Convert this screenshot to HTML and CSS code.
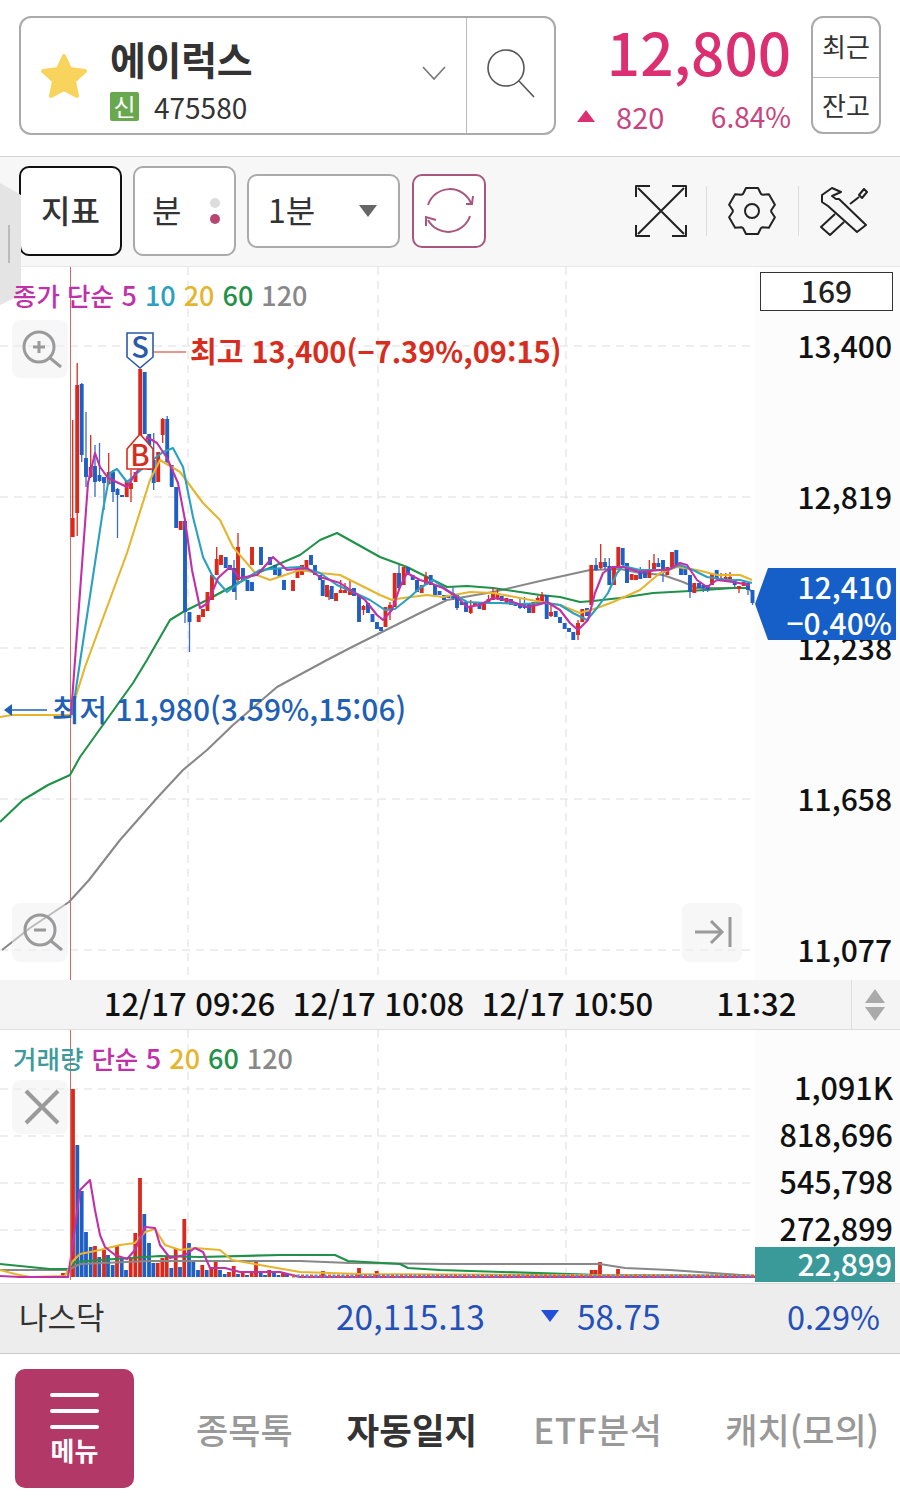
FILE: index.html
```html
<!DOCTYPE html>
<html lang="ko">
<head>
  <meta charset="UTF-8">
  <meta name="viewport" content="width=device-width, initial-scale=1.0">
  <title>에이럭스 차트</title>
  <link rel="stylesheet" href="styles.css">
</head>
<body>

  <header class="quote-header">
    <div class="symbol-box">
      <svg class="star" width="50" height="48" viewBox="0 0 50 48"><path d="M25 4 L31 17 L46 19 L35 29 L38 44 L25 37 L12 44 L15 29 L4 19 L19 17 Z"/></svg>
      <div class="symbol-info">
        <div class="symbol-name">에이럭스</div>
        <div class="symbol-code"><span class="new-badge">신</span>475580</div>
      </div>
      <svg class="chevron" width="26" height="16" viewBox="0 0 26 16"><path d="M2 2 L13 14 L24 2"/></svg>
      <div class="search-btn">
        <svg width="52" height="52" viewBox="0 0 52 52"><circle cx="21" cy="20" r="18"/><path d="M34 33 L49 49"/></svg>
      </div>
    </div>
    <div class="price-box">
      <div class="price-now">12,800</div>
      <div class="price-change">
        <span class="up-arrow"></span>
        <span class="change-amt">820</span>
        <span class="change-pct">6.84%</span>
      </div>
    </div>
    <div class="side-btns">
      <div class="side-btn side-btn-top">최근</div>
      <div class="side-btn">잔고</div>
    </div>
  </header>

  <div class="toolbar">
    <div class="side-tab"></div>
    <button class="tool-btn tool-btn-active">지표</button>
    <button class="tool-btn tool-btn-min">분<span class="dots"><i></i><i class="dot-on"></i></span></button>
    <button class="period-select">1분<span class="down-caret"></span></button>
    <button class="refresh-btn">
      <svg width="74" height="74" viewBox="0 0 74 74"><path d="M16 31 A23 23 0 0 1 59 29 M54 30 L60 30 L61 22 M58 42 A23 23 0 0 1 16 46 M14 52 L14 43 L24 46"/></svg>
    </button>
    <div class="tool-icons">
      <svg width="52" height="52" viewBox="0 0 52 52"><path d="M1 12 V1 H15 M37 1 H51 V12 M51 40 V51 H37 M15 51 H1 V40 M3 3 L49 49 M49 3 L3 49"/></svg>
      <span class="tool-sep"></span>
      <svg width="50" height="50" viewBox="-25 -25 50 50"><path d="M-9 -17 L-6 -23 L6 -23 L9 -17 L10.2 -16.3 L16.9 -16.7 L22.9 -6.3 L19.2 -.7 L19.2 .7 L22.9 6.3 L16.9 16.7 L10.2 16.3 L9 17 L6 23 L-6 23 L-9 17 L-10.2 16.3 L-16.9 16.7 L-22.9 6.3 L-19.2 .7 L-19.2 -.7 L-22.9 -6.3 L-16.9 -16.7 L-10.2 -16.3 Z"/><circle r="7"/></svg>
      <span class="tool-sep tool-sep-wide"></span>
      <svg width="50" height="50" viewBox="0 0 50 50"><path d="M13 2 L3 9 L3 16 L9 20 L38 46 L47 39 L20 13 L17 13 L13 10 L22 6 Z M40 9 L45 3 L48 6 L43 12 Z M40 11 L31 18 M16 28 L2 41 L11 49 L25 36"/></svg>
    </div>
  </div>

  <section class="price-chart">
    <svg class="chart-svg" width="900" height="713" viewBox="0 267 900 713">
      <rect class="axis-bg" x="755" y="267" width="145" height="713"/>
      <path class="grid" d="M0 346H755M0 497H755M0 648H755M0 799H755M0 950H755M188 267V980M378 267V980M566 267V980"/>
      <path class="day-line" d="M70.5 267V980"/>

      <path class="ma ma120" d="M2 950 L30 928 L69 902 L89 880 L120 840 L157 798 L183 770 L207 750 L233 725 L277 687 L327 660 L350 648 L380 633 L420 613 L447 600 L493 592 L540 581 L590 570 L620 569 L640 573 L663 575 L683 582 L697 588 L723 588 L748 588 L752 592"/>
      <path class="ma ma60" d="M0 822 L23 800 L48 785 L70 775 L80 757 L133 683 L147 660 L170 620 L183 612 L207 600 L253 575 L300 555 L320 540 L337 533 L380 557 L407 567 L447 587 L467 586 L493 588 L520 592 L540 595 L560 597 L580 602 L593 601 L620 598 L653 593 L690 591 L733 588 L747 588"/>

      <path class="wick wick-r" d="M72.7 420V537M77.2 363V536M90.7 435V478M108.7 453V485M131 470V502M162.7 418V443M216.7 547V575M238 533V582M329 590V600M340.7 580V593M345 583V593M350 580V595M363.5 605V615M390 602V620M426 572V585M470.7 600V614M488.5 595V603M493 588V600M497.5 589V600M537.7 596V604M542 592V604M551 605V617M578 620V640M600.7 544V569M649.3 560V578M654 554V570M721 573V580M725.7 573V580M730 572V580M739 586V593"/>
      <path class="wick wick-b" d="M81.7 383V462M86 412V487M95 445V497M99.5 443V482M104 477V510M113 470V502M117.5 488V538M153.7 433V490M167.2 416V463M185 521V623M189.5 612V652M234 560V592M236 568V600M399 565V590M453 587V600M457 595V610M520 598V609M524.5 597V609M596 558V571M605 558V570M609.3 558V585M640.3 567V579M658.3 558V567M663 560V582M690 575V598M703.3 585V592M707.7 585V592M734.7 579V587M748 583V595M752.5 590V605"/>
      <path class="body body-r" d="M72.7 518V537M77.2 385V513M90.7 467V477M108.7 472V484M126.7 480V497M131 483V489M135.5 472V482M140.2 369V437M158.2 452V482M162.7 419V435M180.7 521V530M198.7 615V622M203 609V617M207.5 592V611M212 575V600M216.7 559V575M221 555V565M238 547V580M252 547V565M293 580V591M297.5 570V578M302 565V575M306.5 560V572M327 585V597M336 593V601M340.7 590V593M345 590V593M350 589V595M363.5 606V610M385.5 607V627M390 605V610M394.7 573V607M403.7 567V585M421.7 585V593M426 577V585M470.7 607V613M475 602V605M484 602V610M488.5 599V603M493 593V600M497.5 593V598M506.5 598V603M533.3 602V613M537.7 598V604M542 595V604M551 612V616M578 623V635M582.3 609V622M591.3 565V605M600.7 562V568M614 568V585M618.3 547V566M631.7 574V580M636 575V580M649.3 570V578M654 563V570M667.3 567V575M672 552V567M694.3 583V593M712 573V585M721 578V580M725.7 577V580M730 577V580M739 586V589M743.7 582V586"/>
      <path class="body body-b" d="M81.7 384V455M86 458V477M95 466V482M99.5 475V481M104 477V483M113 472V492M117.5 489V495M122 495V497M144.7 372V434M149.2 434V470M153.7 460V483M167.2 419V462M171.7 465V487M176.2 487V528M185 521V612M189.5 612V622M225.7 557V568M230 565V570M234 568V592M243 568V580M247.5 580V591M252 582V591M261 547V565M270 557V565M275 565V575M279.5 568V577M284 580V590M311 555V565M315 565V575M320 575V580M322.7 580V596M331.7 586V599M354 588V596M359 596V622M368 603V613M372.5 614V622M377 622V629M381 627V631M399 573V588M408 567V575M412.7 575V580M417 580V592M430.7 575V585M435 585V595M439.5 591V595M444 595V600M448.5 595V598M453 593V598M457 595V608M461.7 602V605M466 602V612M479.5 602V609M501.7 596V601M511 599V605M515.5 603V606M520 603V608M524.5 603V608M529 604V613M546.7 595V619M555.7 611V617M560 617V623M564.7 623V629M569 628V632M573.3 632V640M587 608V616M596 565V570M605 562V567M609.3 566V585M622.7 548V565M627 563V583M640.3 572V579M645 572V578M658.3 563V567M663 560V573M676.3 550V565M681 565V575M685.3 567V575M690 575V592M699 583V588M703.3 585V588M707.7 585V590M716.7 570V578M734.7 579V585M748 583V590M752.5 590V603"/>

      <path class="ma ma20" d="M0 717 L12 715 L70 715 L85 667 L127 553 L150 480 L160 460 L180 472 L203 503 L220 520 L233 547 L257 575 L270 580 L300 570 L320 573 L340 575 L360 585 L380 595 L392 600 L403 598 L427 595 L443 597 L470 592 L493 593 L520 598 L547 603 L560 605 L580 613 L597 608 L613 602 L640 590 L660 573 L677 567 L697 570 L717 575 L740 575 L752 580"/>
      <path class="ma ma10" d="M72 715 L103 510 L110 473 L117 469 L127 482 L150 462 L163 452 L173 448 L183 467 L193 517 L203 557 L212 575 L227 592 L243 580 L260 570 L283 568 L300 567 L320 573 L337 585 L353 592 L370 600 L385 610 L395 609 L410 597 L420 588 L433 580 L450 592 L467 602 L487 603 L500 603 L520 604 L547 603 L560 605 L573 613 L587 620 L597 608 L608 593 L617 573 L623 566 L640 570 L667 570 L680 565 L693 570 L707 577 L727 580 L740 580 L752 583"/>
      <path class="ma ma5" d="M71 715 L88 483 L95 453 L100 467 L108 478 L127 487 L140 467 L147 437 L157 443 L167 458 L178 483 L185 520 L192 570 L200 608 L208 603 L218 578 L230 567 L240 578 L257 575 L273 557 L287 570 L307 568 L320 577 L340 583 L365 600 L377 615 L383 620 L392 610 L400 587 L407 573 L420 580 L430 583 L443 588 L457 597 L467 607 L480 605 L493 598 L507 600 L527 607 L537 605 L547 602 L560 610 L570 623 L578 630 L588 620 L595 593 L603 573 L612 567 L623 567 L640 572 L660 570 L668 570 L680 563 L687 565 L697 580 L707 587 L717 580 L733 582 L750 585"/>

      <path class="marker marker-s" d="M127 333H153V357L140 368L127 357Z"/>
      <text class="marker-text text-s" x="140" y="358">S</text>
      <path class="marker marker-b" d="M127 449L140 434L153 449V469H127Z"/>
      <text class="marker-text text-b" x="140" y="466">B</text>
      <path class="high-line" d="M153 352H186"/>
      <text class="high-text" x="190" y="363">최고 13,400(−7.39%,09:15)</text>
      <path class="low-line" d="M12 710H47"/>
      <path class="low-head" d="M4 710L12 704V716Z"/>
      <text class="low-text" x="52" y="721">최저 11,980(3.59%,15:06)</text>
    </svg>

    <div class="chart-legend">
      <span class="c-ma5"><span class="legend-ko">종가 단순</span> 5</span>
      <span class="c-ma10">10</span>
      <span class="c-ma20">20</span>
      <span class="c-ma60">60</span>
      <span class="c-ma120">120</span>
    </div>

    <div class="chart-btn btn-zoom-in">
      <svg width="56" height="58" viewBox="0 0 56 58"><circle cx="27" cy="27" r="15"/><path d="M38 38 L49 47 M21 27H33M27 21V33"/></svg>
    </div>
    <div class="chart-btn btn-zoom-out">
      <svg width="56" height="58" viewBox="0 0 56 58"><circle cx="28" cy="27" r="15"/><path d="M39 38 L50 47 M22 27H34"/></svg>
    </div>
    <div class="chart-btn btn-latest">
      <svg width="60" height="58" viewBox="0 0 60 58"><path d="M13 29H40M29 18L40 29L29 40M48 14V44"/></svg>
    </div>

    <div class="count-box">169</div>
    <div class="price-axis">
      <span>13,400</span>
      <span>12,819</span>
      <span>12,238</span>
      <span>11,658</span>
      <span>11,077</span>
    </div>
    <div class="now-tag">
      <span>12,410</span>
      <span>−0.40%</span>
    </div>
  </section>

  <div class="time-axis">
    <div class="time-labels">
      <span>12/17 09:26</span>
      <span>12/17 10:08</span>
      <span>12/17 10:50</span>
      <span>11:32</span>
    </div>
    <div class="time-scroll"><i class="tri-up"></i><i class="tri-down"></i></div>
  </div>

  <section class="volume-chart">
    <svg class="chart-svg" width="900" height="252" viewBox="0 1030 900 252">
      <rect class="axis-bg" x="755" y="1030" width="145" height="252"/>
      <path class="grid" d="M0 1089H755M0 1136H755M0 1183H755M0 1230H755M188 1030V1280M378 1030V1280M566 1030V1280"/>
      <path class="vol vol-r" d="M73 1089V1277M95 1246V1277M104 1250V1277M117 1246V1277M130.7 1257V1277M135.3 1233V1277M140 1178V1277M157.7 1263V1277M162.3 1258V1277M166.7 1257V1277M175.7 1248V1277M184.3 1219V1277M202.3 1265V1277M211.3 1268V1277M215.7 1261V1277M229 1272V1277M233.7 1266V1277M242.7 1273V1277M251.7 1273V1277M256 1262V1277M269.3 1270V1277M283 1273V1277M323 1271V1277M359 1268V1277M376.7 1271V1277M591.7 1270V1277M595.7 1270V1277M600 1262V1277M618 1269V1277M63 1273V1277"/>
      <path class="vol vol-b" d="M77.3 1145V1277M81.7 1191V1277M86 1232V1277M90.7 1247V1277M99.3 1257V1277M108 1255V1277M112.7 1265V1277M121.7 1259V1277M126 1270V1277M144.3 1214V1277M149 1243V1277M153.3 1263V1277M171.3 1268V1277M180 1267V1277M189 1243V1277M193.3 1262V1277M198 1270V1277M206.7 1270V1277M220 1270V1277M224.7 1274V1277M238 1274V1277M247 1275V1277M260.7 1273V1277M265 1275V1277M274 1273V1277M278.5 1275V1277M287 1274V1277"/>
      <path class="ma ma120" d="M0 1270 L68 1270 L80 1264 L150 1261 L300 1261 L350 1263 L450 1264 L600 1264 L625 1268 L670 1270 L755 1276"/>
      <path class="ma ma60" d="M0 1264 L50 1269 L68 1269 L75 1262 L100 1260 L130 1258 L160 1256 L200 1257 L280 1255 L335 1255 L348 1261 L400 1264 L408 1268 L440 1270 L600 1275 L755 1276"/>
      <path class="ma ma20" d="M0 1270 L15 1274 L30 1277 L65 1276 L72 1262 L80 1254 L100 1250 L120 1245 L135 1243 L145 1232 L155 1229 L165 1245 L180 1250 L195 1248 L220 1250 L232 1260 L260 1265 L300 1272 L360 1274 L755 1276"/>
      <path class="ma ma5" d="M0 1276 L20 1277 L68 1277 L72 1250 L80 1190 L90 1180 L95 1210 L100 1235 L105 1247 L115 1255 L127 1259 L135 1250 L145 1227 L155 1228 L160 1245 L170 1258 L185 1255 L195 1248 L203 1252 L210 1268 L225 1268 L240 1272 L280 1272 L300 1277 L755 1277"/>
      <path class="vol-tiny vol-tiny-r" d="M292 1276H755"/>
      <path class="vol-tiny vol-tiny-b" d="M296.5 1276H755"/>
      <path class="day-line" d="M70.5 1030V1280"/>
    </svg>

    <div class="chart-legend">
      <span class="c-vol legend-ko">거래량</span>
      <span class="c-ma5"><span class="legend-ko">단순</span> 5</span>
      <span class="c-ma20">20</span>
      <span class="c-ma60">60</span>
      <span class="c-ma120">120</span>
    </div>
    <div class="chart-btn btn-close">
      <svg width="56" height="54" viewBox="0 0 56 54"><path d="M14 11 L46 43 M46 11 L14 43"/></svg>
    </div>
    <div class="volume-axis">
      <span>1,091K</span>
      <span>818,696</span>
      <span>545,798</span>
      <span>272,899</span>
    </div>
    <div class="volume-tag">22,899</div>
  </section>

  <div class="ticker">
    <div class="ticker-name">나스닥</div>
    <div class="ticker-value">20,115.13</div>
    <div class="ticker-change"><span class="down-arrow"></span>58.75</div>
    <div class="ticker-pct">0.29%</div>
  </div>

  <nav class="bottom-nav">
    <div class="menu-btn">
      <span class="menu-bar"></span>
      <span class="menu-bar"></span>
      <span class="menu-bar"></span>
      <span class="menu-label">메뉴</span>
    </div>
    <a class="nav-item nav-1">종목톡</a>
    <a class="nav-item nav-2 nav-active">자동일지</a>
    <a class="nav-item nav-3">ETF분석</a>
    <a class="nav-item nav-4">캐치(모의)</a>
  </nav>

</body>
</html>
```

FILE: styles.css
```css
* {
  box-sizing: border-box;
}
body {
  margin: 0;
  width: 900px;
  height: 1503px;
  overflow: hidden;
  background-color: #fff;
  color: #333;
  font-family: "Noto Sans CJK KR", "Noto Sans", sans-serif;
  font-feature-settings: "calt" 0;
}
button {
  font-family: inherit;
  font-feature-settings: inherit;
  color: inherit;
  padding: 0;
}

/* header */
.quote-header {
  height: 157px;
  padding: 16px 19px 0;
  display: flex;
  border-bottom: 1px solid #d6d6d6;
}
.symbol-box {
  width: 538px;
  height: 119px;
  display: flex;
  align-items: center;
  border: 2px solid #aaa;
  border-radius: 12px;
}
.star {
  margin-left: 18px;
  margin-top: 1px;
  flex: none;
}
.star path {
  fill: #f9d45c;
  stroke: #f9d45c;
  stroke-width: 4;
  stroke-linejoin: round;
}
.symbol-info {
  margin-left: 21px;
  padding-top: 5px;
  flex: 1;
}
.symbol-name {
  font-size: 39px;
  font-weight: 700;
  line-height: 46px;
  letter-spacing: -0.3px;
}
.symbol-code {
  display: flex;
  align-items: center;
  margin-top: 11px;
  font-size: 28px;
  line-height: 30px;
}
.new-badge {
  width: 29px;
  height: 29px;
  margin-right: 15px;
  background-color: #6aa84f;
  color: #fff;
  font-size: 24px;
  line-height: 28px;
  text-align: center;
  border-radius: 2px;
}
.chevron {
  margin-right: 19px;
  margin-bottom: 5px;
  flex: none;
}
.chevron path {
  fill: none;
  stroke: #777;
  stroke-width: 1.6;
}
.search-btn {
  width: 88px;
  height: 100%;
  flex: none;
  padding: 30px 0 0 18px;
  border-left: 1px solid #bbb;
}
.search-btn svg {
  display: block;
}
.search-btn circle,
.search-btn path {
  fill: none;
  stroke: #555;
  stroke-width: 1.6;
}
.price-box {
  width: 235px;
  display: flex;
  flex-direction: column;
  align-items: flex-end;
}
.price-now {
  color: #db2f72;
  font-size: 58.5px;
  font-weight: 500;
  line-height: 70px;
}
.price-change {
  width: 214px;
  margin-top: 12px;
  display: flex;
  align-items: center;
  color: #c9437e;
  font-size: 29px;
  line-height: 36px;
}
.up-arrow {
  width: 0;
  height: 0;
  border-left: 9px solid transparent;
  border-right: 9px solid transparent;
  border-bottom: 12px solid #db2f72;
}
.change-amt {
  margin-left: 21px;
}
.change-pct {
  margin-left: auto;
  font-size: 28px;
}
.side-btns {
  width: 70px;
  height: 118px;
  margin-left: 20px;
  display: flex;
  flex-direction: column;
  border: 2px solid #aaa;
  border-radius: 12px;
}
.side-btn {
  flex: 1;
  display: flex;
  align-items: center;
  justify-content: center;
  font-size: 26px;
}
.side-btn-top {
  padding-bottom: 4px;
}
.side-btn + .side-btn {
  border-top: 1px solid #bbb;
}

/* toolbar */
.toolbar {
  position: relative;
  height: 110px;
  padding-left: 19px;
  padding-bottom: 2px;
  display: flex;
  align-items: center;
  background-color: #f7f7f7;
  border-bottom: 1px solid #e8e8e8;
}
.side-tab {
  position: absolute;
  z-index: 2;
  left: 0;
  top: 26px;
  width: 21px;
  height: 122px;
  background-color: #e4e4e4;
  clip-path: polygon(0 0, 100% 12px, 100% 112px, 0 100%);
}
.side-tab::after {
  content: "";
  position: absolute;
  left: 8px;
  top: 42px;
  width: 2px;
  height: 38px;
  background-color: #bbb;
}
.tool-btn {
  width: 103px;
  height: 90px;
  margin-right: 11px;
  padding-bottom: 4px;
  background-color: #fff;
  border: 2px solid #aaa;
  border-radius: 10px;
  font-size: 32px;
  position: relative;
}
.tool-btn-active {
  border-color: #111;
  font-weight: 500;
}
.tool-btn-min {
  text-align: left;
  padding-left: 17px;
}
.dots {
  position: absolute;
  right: 14px;
  top: 30px;
  display: flex;
  flex-direction: column;
  gap: 6px;
}
.dots i {
  width: 10px;
  height: 10px;
  border-radius: 50%;
  background-color: #ddd;
}
.dots .dot-on {
  background-color: #b84670;
}
.period-select {
  width: 153px;
  height: 74px;
  margin-right: 12px;
  padding: 0 21px 3px 19px;
  display: flex;
  align-items: center;
  justify-content: space-between;
  background-color: #fff;
  border: 2px solid #aaa;
  border-radius: 10px;
  font-size: 32px;
}
.down-caret {
  width: 0;
  height: 0;
  margin-top: 3px;
  border-left: 9px solid transparent;
  border-right: 9px solid transparent;
  border-top: 12px solid #666;
}
.refresh-btn {
  width: 74px;
  height: 74px;
  background-color: #fff;
  border: 2px solid #a8567e;
  border-radius: 10px;
  position: relative;
}
.refresh-btn svg {
  position: absolute;
  left: -2px;
  top: -2px;
}
.refresh-btn path {
  fill: none;
  stroke: #a8567e;
  stroke-width: 2;
}
.tool-icons {
  margin-left: auto;
  margin-right: 31px;
  display: flex;
  align-items: center;
}
.tool-icons path,
.tool-icons circle {
  fill: none;
  stroke: #222;
  stroke-width: 2;
  stroke-linejoin: round;
}
.tool-sep {
  width: 1px;
  height: 50px;
  background-color: #ddd;
  margin: 0 20px 0 19px;
}
.tool-sep-wide {
  margin-left: 21px;
}

/* chart panels */
.price-chart {
  position: relative;
  height: 713px;
  background-color: #fff;
}
.chart-svg {
  position: absolute;
  left: 0;
  top: 0;
}
.axis-bg {
  fill: #fcfcfc;
}
.grid {
  fill: none;
  stroke: #ddd;
  stroke-width: 1;
  stroke-dasharray: 8 6;
}
.day-line {
  fill: none;
  stroke: #d4685f;
  stroke-width: 1;
}
.ma {
  fill: none;
  stroke-width: 2.1;
  stroke-linejoin: round;
}
.ma5 {
  stroke: #c030a8;
}
.ma10 {
  stroke: #2ba0c0;
}
.ma20 {
  stroke: #e5b52e;
}
.ma60 {
  stroke: #1f9148;
}
.ma120 {
  stroke: #888;
}
.wick {
  fill: none;
  stroke-width: 1.3;
}
.wick-r {
  stroke: #d9291c;
}
.wick-b {
  stroke: #3a6cc0;
}
.body {
  fill: none;
  stroke-width: 3.9;
}
.body-r {
  stroke: #d9291c;
}
.body-b {
  stroke: #1f5fc4;
}
.marker {
  fill: #fff;
  stroke-width: 1.6;
}
.marker-s {
  stroke: #2b5aa8;
}
.marker-b {
  stroke: #d62d20;
}
.marker-text {
  font-size: 29px;
  font-weight: 500;
  text-anchor: middle;
}
.text-s {
  fill: #2b5aa8;
}
.text-b {
  fill: #d62d20;
}
.high-line {
  fill: none;
  stroke: #d62d20;
  stroke-width: 1;
}
.high-text {
  fill: #d62d20;
  font-size: 29px;
  font-weight: 700;
}
.low-line {
  fill: none;
  stroke: #1f5fb4;
  stroke-width: 1.5;
}
.low-head {
  fill: #1f5fb4;
}
.low-text {
  fill: #1f5fb4;
  font-size: 30px;
  font-weight: 500;
}
.chart-legend {
  position: absolute;
  z-index: 3;
  left: 13px;
  top: 9px;
  display: flex;
  gap: 8px;
  font-size: 27px;
  font-weight: 500;
  line-height: 38px;
}
.legend-ko {
  font-size: 25.5px;
}
.c-ma5 {
  color: #c030a8;
}
.c-ma10 {
  color: #2ba0c0;
}
.c-ma20 {
  color: #e5b52e;
}
.c-ma60 {
  color: #1f9148;
}
.c-ma120 {
  color: #888;
}
.c-vol {
  color: #3d9a9a;
}
.chart-btn {
  position: absolute;
  background-color: rgba(240, 240, 240, 0.5);
  border-radius: 8px;
}
.chart-btn svg {
  display: block;
}
.chart-btn path,
.chart-btn circle {
  fill: none;
  stroke: #9a9a9a;
  stroke-width: 3;
}
.btn-zoom-in {
  left: 12px;
  top: 53px;
  width: 56px;
  height: 58px;
}
.btn-zoom-out {
  left: 12px;
  top: 636px;
  width: 56px;
  height: 59px;
}
.btn-latest {
  left: 682px;
  top: 636px;
  width: 60px;
  height: 59px;
}
.btn-close {
  left: 12px;
  top: 50px;
  width: 56px;
  height: 54px;
}
.btn-close path {
  stroke-width: 4;
}
.count-box {
  position: absolute;
  left: 760px;
  top: 5px;
  width: 133px;
  height: 39px;
  border: 1px solid #333;
  background-color: #fff;
  font-size: 30px;
  font-weight: 500;
  line-height: 35px;
  text-align: center;
  color: #222;
}
.price-axis {
  position: absolute;
  right: 8px;
  top: 3px;
  display: flex;
  flex-direction: column;
  align-items: flex-end;
  font-size: 30px;
  font-weight: 500;
  line-height: 151px;
  color: #111;
}
.now-tag {
  position: absolute;
  left: 755px;
  top: 301px;
  width: 141px;
  height: 72px;
  padding-right: 4px;
  padding-bottom: 1px;
  display: flex;
  flex-direction: column;
  align-items: flex-end;
  justify-content: center;
  background-color: #165fc9;
  clip-path: polygon(13px 0, 100% 0, 100% 100%, 13px 100%, 0 50%);
  color: #fff;
  font-size: 30px;
  font-weight: 500;
  line-height: 36px;
}

/* time axis */
.time-axis {
  height: 50px;
  padding-left: 95px;
  display: flex;
  background-color: #f4f4f4;
  border-bottom: 1px solid #ddd;
}
.time-labels {
  flex: 1;
  padding-bottom: 4px;
  display: grid;
  grid-template-columns: repeat(4, 189px);
  align-items: center;
  font-size: 31px;
  font-weight: 500;
  color: #111;
  text-align: center;
}
.time-scroll {
  width: 49px;
  padding-right: 3px;
  border-left: 1px solid #ddd;
  display: flex;
  flex-direction: column;
  align-items: center;
  justify-content: center;
  gap: 4px;
}
.tri-up {
  border-left: 10px solid transparent;
  border-right: 10px solid transparent;
  border-bottom: 14px solid #aaa;
}
.tri-down {
  border-left: 10px solid transparent;
  border-right: 10px solid transparent;
  border-top: 14px solid #aaa;
}
.volume-chart {
  position: relative;
  height: 253px;
  background-color: #fff;
}
.vol {
  fill: none;
  stroke-width: 3.8;
}
.vol-r {
  stroke: #d9291c;
}
.vol-b {
  stroke: #1f5fc4;
}
.vol-tiny {
  fill: none;
  stroke-width: 3;
  stroke-dasharray: 3 6;
}
.vol-tiny-r {
  stroke: #d9564c;
}
.vol-tiny-b {
  stroke: #5a86cc;
}
.volume-axis {
  position: absolute;
  right: 7px;
  top: 34px;
  display: flex;
  flex-direction: column;
  align-items: flex-end;
  font-size: 30.5px;
  font-weight: 500;
  line-height: 47px;
  color: #111;
}
.volume-tag {
  position: absolute;
  left: 755px;
  top: 217px;
  width: 140px;
  height: 35px;
  padding-right: 3px;
  background-color: #3a9a9a;
  color: #fff;
  font-size: 30px;
  font-weight: 500;
  line-height: 33px;
  text-align: right;
}

/* ticker */
.ticker {
  height: 71px;
  padding: 0 20px 6px 19px;
  display: flex;
  align-items: center;
  background-color: #ededed;
  border-bottom: 1px solid #ccc;
  border-top: 1px solid #ddd;
  font-size: 33.5px;
  color: #2450b8;
}
.ticker-name {
  width: 317px;
  color: #333;
  font-size: 31px;
}
.ticker-value {
  width: 205px;
}
.ticker-change {
  display: flex;
  align-items: center;
}
.down-arrow {
  width: 0;
  height: 0;
  margin-right: 18px;
  border-left: 9px solid transparent;
  border-right: 9px solid transparent;
  border-top: 12px solid #2450d8;
}
.ticker-pct {
  margin-left: auto;
  font-size: 32.5px;
}

/* bottom nav */
.bottom-nav {
  position: relative;
  height: 149px;
  padding-left: 15px;
  display: flex;
  align-items: center;
}
.menu-btn {
  width: 119px;
  height: 119px;
  display: flex;
  flex-direction: column;
  align-items: center;
  padding-top: 24px;
  background-color: #b23867;
  border-radius: 10px;
}
.menu-bar {
  width: 49px;
  height: 4px;
  margin-bottom: 12px;
  background-color: #fff;
  border-radius: 2px;
}
.menu-label {
  margin-top: -6px;
  color: #fff;
  font-size: 26px;
  font-weight: 700;
  line-height: 30px;
}
.nav-item {
  color: #999;
  font-size: 35px;
  font-weight: 500;
}
.nav-1 {
  margin-left: 62px;
}
.nav-2 {
  margin-left: 54px;
}
.nav-3 {
  margin-left: 56px;
  letter-spacing: 0.5px;
}
.nav-4 {
  margin-left: 63px;
}
.nav-active {
  color: #333;
  font-size: 35.5px;
  font-weight: 700;
}
```
